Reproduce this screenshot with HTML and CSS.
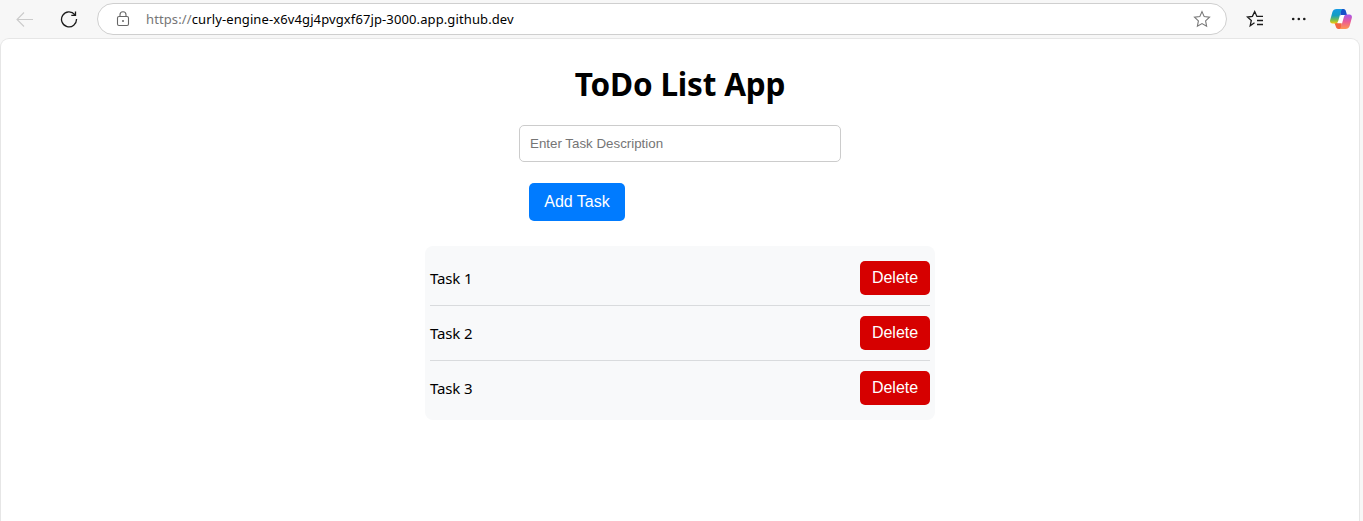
FILE: index.html
```html
<!DOCTYPE html>
<html lang="en">
<head>
<meta charset="utf-8">
<title>ToDo List App</title>
<link rel="stylesheet" href="styles.css">
</head>
<body>
<header class="toolbar">
  <svg class="icon back" width="18" height="18" viewBox="0 0 18 18"><path d="M17 9.5H1.2M8 2.5l-7 7 7 7"/></svg>
  <svg class="icon reload" width="18" height="18" viewBox="0 0 18 18"><path d="M14.8 4.6A7.5 7.5 0 1 0 16.5 9M15.5 1.5v3.9h-4.2"/></svg>
  <div class="address">
    <svg class="icon lock" width="14" height="16" viewBox="0 0 14 16"><rect x="1.5" y="5.5" width="11" height="9" rx="1.5"/><path d="M4 5.5V3.7a3 3 0 0 1 6 0v1.8"/><circle class="dot" cx="7" cy="10" r="1"/></svg>
    <span class="url"><span class="scheme">https://</span>curly-engine-x6v4gj4pvgxf67jp-3000.app.github.dev</span>
    <svg class="icon star" width="18" height="18" viewBox="0 0 18 18"><path d="M9 1.6l2.2 5 5.3.6-3.9 3.7 1 5.3L9 13.6l-4.6 2.6 1-5.3-3.9-3.7 5.3-.6z"/></svg>
  </div>
  <svg class="icon favorites" width="18" height="18" viewBox="0 0 18 18"><path d="M8.5 12.8l-4.3 2.9 1.1-5.2L1.4 7l5-.6L8.7 1.6l2.2 4.8H17M11 10.5h6M11 14.5h6"/></svg>
  <svg class="more" width="16" height="4" viewBox="0 0 16 4"><circle cx="2.2" cy="2" r="1.3"/><circle cx="7.8" cy="2" r="1.3"/><circle cx="13.3" cy="2" r="1.3"/></svg>
  <svg class="copilot" width="22" height="20" viewBox="0 0 22 20">
    <defs>
      <linearGradient id="cool" x1="0" y1="0" x2="0" y2="1"><stop offset="0" stop-color="#159be4"/><stop offset=".45" stop-color="#169ec0"/><stop offset=".75" stop-color="#75bd52"/><stop offset="1" stop-color="#f5ca0a"/></linearGradient>
      <linearGradient id="warm" x1="0" y1="0" x2="0" y2="1"><stop offset="0" stop-color="#a657ed"/><stop offset=".5" stop-color="#ec5c94"/><stop offset="1" stop-color="#ff9851"/></linearGradient>
    </defs>
    <path fill="#154fc8" d="M10 0h3.5c1.5 0 2 1 2.4 2.2L17 6h-3c-2 0-3 1-3.5 2z"/>
    <path fill="#f26641" d="M4.5 14h3.8c1.8 0 2.7-1 3.2-2.5L12 20H8.5c-1.6 0-2.3-1-2.7-2.5z"/>
    <path fill="#fff" d="M10.6 6h3.8l-2.5 8.2H7.4z"/>
    <path fill="url(#cool)" d="M6.5 0h5.9c-1.3 1-1.6 3-2.2 5L8.2 12c-.5 1.7-1.4 2.5-3.2 2.5H2.5C.5 14.5-.3 13 .2 11L2.4 3C3 1 4.5 0 6.5 0z"/>
    <path fill="url(#warm)" d="M15.5 20H9.6c1.4-1 1.7-3 2.3-5l2-7c.5-1.7 1.4-2.5 3.2-2.5h2.4c2 0 2.8 1.5 2.3 3.5L19.6 17c-.6 2-2.1 3-4.1 3z"/>
  </svg>
</header>
<main class="page">
  <h1 class="title">ToDo List App</h1>
  <form class="task-form">
    <input class="task-input" type="text" placeholder="Enter Task Description">
    <button class="add-button" type="button">Add Task</button>
  </form>
  <ul class="task-list">
    <li class="task"><span class="task-name">Task 1</span><button class="delete-button">Delete</button></li>
    <li class="task"><span class="task-name">Task 2</span><button class="delete-button">Delete</button></li>
    <li class="task"><span class="task-name">Task 3</span><button class="delete-button">Delete</button></li>
  </ul>
</main>
</body>
</html>
```
FILE: styles.css
```css
* { box-sizing: border-box; }
body {
  margin: 0;
  height: 521px;
  overflow: hidden;
  display: flex;
  flex-direction: column;
  background: #f7f7f7;
  color: #000;
  font-family: "Noto Sans", "Open Sans", sans-serif;
}
.toolbar {
  flex: none;
  height: 38px;
  display: flex;
  align-items: center;
  padding-left: 16px;
}
.icon { flex: none; fill: none; stroke: #1b1b1b; stroke-width: 1.3; }
.back { stroke: #cbcbcb; stroke-width: 1.1; }
.reload { margin-left: 26px; }
.address {
  width: 1130px;
  height: 32px;
  margin-left: 19px;
  padding: 0 15px 0 18px;
  display: flex;
  align-items: center;
  background: #fff;
  border: 1px solid #cfcfcf;
  border-radius: 16px;
}
.lock { stroke: #666; stroke-width: 1.1; }
.lock .dot { fill: #666; stroke: none; }
.url {
  margin-left: 16px;
  flex: 1;
  font-size: 13px;
  line-height: 18px;
  letter-spacing: 0.112px;
  white-space: nowrap;
}
.scheme { color: #767676; }
.star { stroke: #777; stroke-width: 1.1; }
.favorites { margin-left: 19px; }
.more { margin-left: 27px; fill: #1b1b1b; }
.copilot { margin-left: 23px; }
.page {
  flex: 1;
  margin: 0 3px 0 0;
  padding-top: 23px;
  display: flex;
  flex-direction: column;
  align-items: center;
  background: #fff;
  border: 1px solid #e6e6e6;
  border-bottom: 0;
  border-radius: 9px 9px 0 0;
}
.title {
  margin: 0;
  font-size: 31.5px;
  line-height: 43px;
  font-weight: 700;
  letter-spacing: -0.2px;
  white-space: nowrap;
}
.task-form {
  width: 322px;
  margin-top: 20px;
  display: flex;
  flex-direction: column;
  align-items: flex-start;
}
.task-input {
  width: 322px;
  height: 37px;
  padding: 0 10px;
  border: 1px solid #ccc;
  border-radius: 5px;
  font: 13.333px "Liberation Sans", Arial, sans-serif;
}
.task-input::placeholder { color: #757575; }
.add-button, .delete-button {
  padding: 0;
  border: 0;
  border-radius: 5px;
  color: #fff;
  font: 16px "Liberation Sans", Arial, sans-serif;
}
.add-button {
  width: 96px;
  height: 38px;
  margin: 21px 0 0 10px;
  background: #007bff;
}
.task-list {
  width: 510px;
  margin: 25px 0 0;
  padding: 5px;
  list-style: none;
  background: #f8f9fa;
  border-radius: 8px;
}
.task {
  display: flex;
  align-items: center;
  justify-content: space-between;
  padding: 10px 0;
  border-bottom: 1px solid #d9dbdd;
}
.task:last-child { border-bottom: 0; }
.task-name { font-size: 15px; line-height: 20px; letter-spacing: -0.15px; }
.delete-button { width: 70px; height: 34px; background: #d60000; }
```
